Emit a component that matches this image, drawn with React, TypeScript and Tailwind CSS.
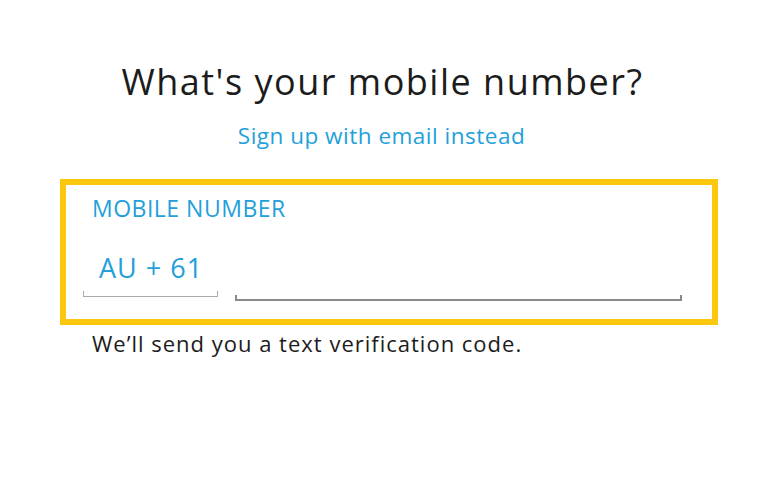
export default function App() {
  return (
    <div className="w-[768px] h-[498px] bg-white flex flex-col" style={{ fontFamily: "'Open Sans', sans-serif" }}>
      <h1 className="mt-[58px] text-center -ml-[3px] text-[36px] leading-[48px] tracking-[1.5px] text-[#1c1c1c] font-normal">What's your mobile number?</h1>
      <a className="mt-[16px] text-center -ml-[5px] text-[22.5px] leading-[28px] tracking-[0.5px] text-[#239fda]">Sign up with email instead</a>
      <div className="mt-[29px] ml-[60px] w-[658px] h-[146px] border-[6px] border-[#fbc70f] flex flex-col">
        <div className="mt-[9px] ml-[26px] text-[23px] leading-[28px] tracking-[0.5px] text-[#239fda]">MOBILE NUMBER</div>
        <div className="mt-[30px] ml-[17px] mr-[30px] flex items-start gap-[17px]">
          <div className="w-[135px] flex flex-col">
            <div className="pl-[16px] text-[27px] leading-[32px] tracking-[1px] text-[#239fda]">AU + 61</div>
            <div className="mt-[7px] h-[6px] border-l-[1.5px] border-r-[1.5px] border-b-[1.5px] border-[#ababab]" />
          </div>
          <div className="flex-1 mt-[43px] h-[6px] border-l-2 border-r-2 border-b-2 border-[#8a8a8a]" />
        </div>
      </div>
      <div className="ml-[92px] mt-[4px] text-[22px] leading-[28px] tracking-[1px] text-[#1c1c1c]">We’ll send you a text verification code.</div>
    </div>
  );
}
